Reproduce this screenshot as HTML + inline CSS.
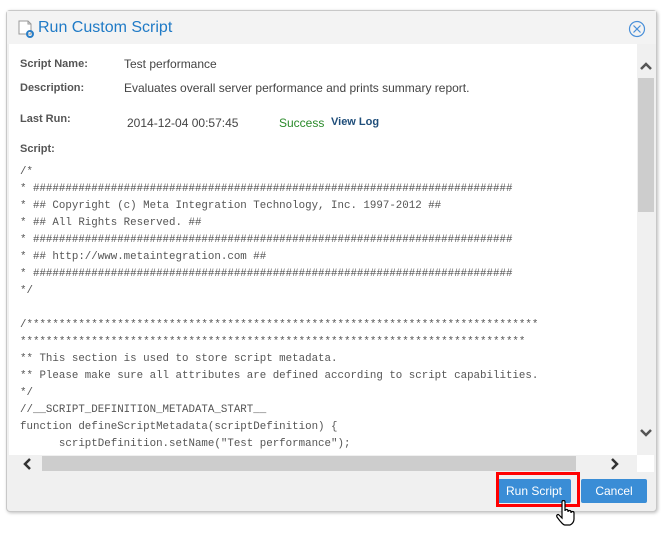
<!DOCTYPE html>
<html><head><style>
body{margin:0;width:661px;height:533px;background:#fff;position:relative;overflow:hidden;font-family:"Liberation Sans",sans-serif}
.dlg{position:absolute;left:6px;top:10px;width:649px;height:500px;background:#f0f0f0;border:1px solid #c8c8c8;border-radius:4px;box-shadow:1px 1px 3px rgba(0,0,0,.25)}
.hdr{position:absolute;left:0;top:0;width:649px;height:33px;background:#f3f3f3}
.title{position:absolute;left:31px;top:8px;font-size:16px;color:#1f7ac6}
.body{position:absolute;left:2px;top:33px;width:645px;height:428px;background:#fff;overflow:hidden}
.lbl{position:absolute;left:11px;font-size:11px;font-weight:bold;color:#555}
.val{position:absolute;font-size:12px;color:#444}
pre{position:absolute;left:11px;top:120px;margin:0;font-family:"Liberation Mono",monospace;font-size:10.8px;line-height:17px;color:#555}
.vs{position:absolute;left:628px;top:0;width:19px;height:411px;background:#f0f0f0}
.hs{position:absolute;left:0;top:411px;width:628px;height:17px;background:#f0f0f0}
.btn{position:absolute;top:479px;height:24px;background:#3a8dd6;color:#fff;font-size:12px;text-align:center;line-height:24px;border-radius:2px}
</style></head><body>
<div class="dlg">
 <div class="hdr">
  <svg style="position:absolute;left:10px;top:8px" width="18" height="20" viewBox="0 0 18 20"><path d="M2 2h9l3 3v10H2z" fill="#fff" stroke="#999"/><path d="M11 2v3h3" fill="none" stroke="#999"/><circle cx="13" cy="15" r="3" fill="none" stroke="#2a7fc8" stroke-width="2"/></svg>
  <div class="title">Run Custom Script</div>
  <svg style="position:absolute;left:621px;top:9px" width="18" height="18" viewBox="0 0 18 18"><circle cx="9" cy="9" r="7.5" fill="none" stroke="#4a90d9" stroke-width="1.2"/><path d="M5.5 5.5l7 7M12.5 5.5l-7 7" stroke="#4a90d9" stroke-width="1.2"/></svg>
 </div>
 <div class="body">
  <div class="lbl" style="top:14px">Script Name:</div><div class="val" style="left:115px;top:13px">Test performance</div>
  <div class="lbl" style="top:38px">Description:</div><div class="val" style="left:115px;top:37px">Evaluates overall server performance and prints summary report.</div>
  <div class="lbl" style="top:69px">Last Run:</div><div class="val" style="left:118px;top:72px">2014-12-04 00:57:45</div>
  <div class="val" style="left:270px;top:72px;color:#2a8a2a">Success</div>
  <div class="val" style="left:322px;top:72px;font-size:11px;font-weight:bold;color:#1f4e7a">View Log</div>
  <div class="lbl" style="top:99px">Script:</div>
<pre>/*
* ##########################################################################
* ## Copyright (c) Meta Integration Technology, Inc. 1997-2012 ##
* ## All Rights Reserved. ##
* ##########################################################################
* ## http://www.metaintegration.com ##
* ##########################################################################
*/

/*******************************************************************************
******************************************************************************
** This section is used to store script metadata.
** Please make sure all attributes are defined according to script capabilities.
*/
//__SCRIPT_DEFINITION_METADATA_START__
function defineScriptMetadata(scriptDefinition) {
      scriptDefinition.setName("Test performance");</pre>
  <div class="vs"><div style="position:absolute;left:1px;top:34px;width:16px;height:134px;background:#cdcdcd"></div>
   <svg style="position:absolute;left:3px;top:17px" width="12" height="10"><path d="M1 8l5-5 5 5" fill="none" stroke="#555" stroke-width="2.5"/></svg>
   <svg style="position:absolute;left:3px;top:384px" width="12" height="10"><path d="M1 2l5 5 5-5" fill="none" stroke="#555" stroke-width="2.5"/></svg>
  </div>
  <div class="hs"><div style="position:absolute;left:33px;top:1px;width:534px;height:15px;background:#cdcdcd"></div>
   <svg style="position:absolute;left:13px;top:3px" width="10" height="12"><path d="M8 1L3 6l5 5" fill="none" stroke="#333" stroke-width="2.5"/></svg>
   <svg style="position:absolute;left:601px;top:3px" width="10" height="12"><path d="M2 1l5 5-5 5" fill="none" stroke="#333" stroke-width="2.5"/></svg>
  </div>
 </div>
</div>
<div class="btn" style="left:497px;width:74px">Run Script</div>
<div style="position:absolute;border:3px solid #f00;box-sizing:border-box;left:496px;top:472px;width:84px;height:35px"></div>
<div class="btn" style="left:581px;width:66px">Cancel</div>
<svg style="position:absolute;left:556px;top:500px" width="22" height="26" viewBox="0 0 22 26"><path d="M6 2c0-2 3-2 3 0v9c0-2 3-2 3 0v1c0-2 3-2 3 0v1c0-2 3-2 3 0v6c0 3-2 5-4 6H9c-2 0-3-2-5-4l-3-4c-1-2 1-3 2-2l3 3z" fill="#fff" stroke="#000" stroke-width="1.2"/></svg>
</body></html>
